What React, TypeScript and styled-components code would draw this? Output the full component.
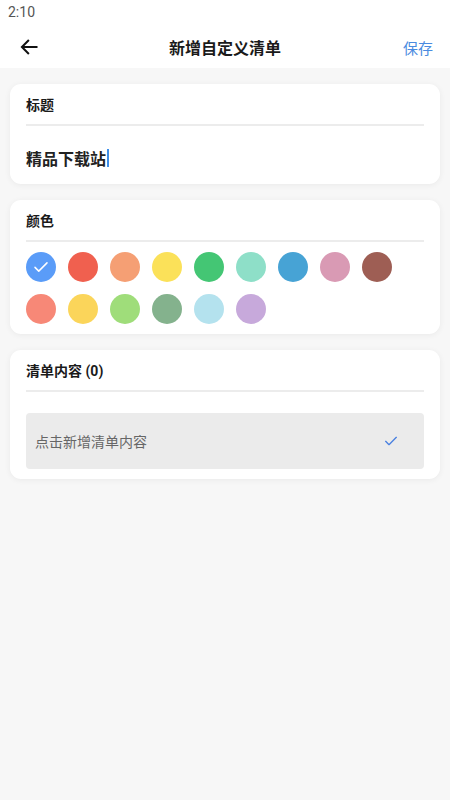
import React, { useState } from 'react';
import styled, { createGlobalStyle } from 'styled-components';

const GlobalStyle = createGlobalStyle`
  html, body {
    margin: 0;
    padding: 0;
    background: #f7f7f7;
    font-family: Roboto, "Noto Sans CJK SC", sans-serif;
  }
  * { box-sizing: border-box; }
`;

const Page = styled.div`
  width: 450px;
  min-height: 800px;
  background: #f7f7f7;
  display: flex;
  flex-direction: column;
`;

const TopArea = styled.div`
  background: #ffffff;
  display: flex;
  flex-direction: column;
`;

const StatusBar = styled.div`
  height: 26px;
  padding: 4px 0 0 8px;
  font-size: 14px;
  color: #555;
`;

const Header = styled.div`
  height: 42px;
  display: flex;
  align-items: center;
  justify-content: space-between;
  padding: 0 17px 0 18px;
  position: relative;
`;

const BackButton = styled.button`
  border: none;
  background: none;
  padding: 0;
  width: 22px;
  height: 22px;
  display: flex;
  align-items: center;
  justify-content: center;
  cursor: pointer;
`;

const HeaderTitle = styled.h1`
  position: absolute;
  left: 0;
  right: 0;
  text-align: center;
  margin: 0;
  font-size: 16px;
  font-weight: 700;
  color: #1a1a1a;
  pointer-events: none;
`;

const SaveButton = styled.button`
  border: none;
  background: none;
  padding: 0;
  font-family: inherit;
  font-size: 15px;
  color: #4a8be0;
  cursor: pointer;
`;

const Content = styled.div`
  display: flex;
  flex-direction: column;
  gap: 16px;
  padding: 16px 10px;
`;

const Card = styled.section`
  background: #fff;
  border-radius: 11px;
  box-shadow: 0 1px 6px rgba(0, 0, 0, 0.06);
  padding: 0 16px;
`;

const CardTitle = styled.div`
  height: 42px;
  display: flex;
  align-items: center;
  font-size: 14px;
  font-weight: 700;
  color: #1a1a1a;
  border-bottom: 2px solid #ececec;
`;

const TitleInputRow = styled.div`
  height: 58px;
  display: flex;
  align-items: center;
  padding-top: 6px;
  font-size: 16px;
  font-weight: 700;
  color: #222;
`;

const Caret = styled.span`
  display: inline-block;
  width: 2px;
  height: 18px;
  background: #3d8ee8;
  margin-left: 1px;
`;

const ColorGrid = styled.div`
  display: grid;
  grid-template-columns: repeat(9, 30px);
  column-gap: 12px;
  row-gap: 12px;
  padding: 10px 0;
`;

const Swatch = styled.button<{ $color: string }>`
  width: 30px;
  height: 30px;
  border-radius: 50%;
  border: none;
  padding: 0;
  background: ${({ $color }) => $color};
  display: flex;
  align-items: center;
  justify-content: center;
  cursor: pointer;
`;

const ItemsBody = styled.div`
  padding: 21px 0 10px;
`;

const AddItem = styled.div`
  height: 56px;
  background: #ebebeb;
  border-radius: 4px;
  display: flex;
  align-items: center;
  justify-content: space-between;
  padding: 0 25px 0 9px;
  font-size: 14px;
  color: #666;
`;

const colors = [
  '#5a9cf8', '#f0604f', '#f59f74', '#fbe159', '#44c674', '#8edfc8',
  '#47a3d5', '#d99ab4', '#9e5e54', '#f78877', '#fbd55a', '#9fdd7a',
  '#84b28d', '#b4e2ee', '#c7a9db',
];

const Check: React.FC<{ color: string; size: number }> = ({ color, size }) => (
  <svg width={size} height={size} viewBox="0 0 24 24" fill="none">
    <path d="M4 12.5l5 5L20 6.5" stroke={color} strokeWidth="2" strokeLinecap="round" strokeLinejoin="round" />
  </svg>
);

const App: React.FC = () => {
  const [selected, setSelected] = useState(0);

  return (
    <Page>
      <GlobalStyle />
      <TopArea>
        <StatusBar>2:10</StatusBar>
        <Header>
          <BackButton aria-label="back">
            <svg width="20" height="20" viewBox="0 0 24 24" fill="none">
              <path d="M21 12H4M11 4.5L3.5 12l7.5 7.5" stroke="#111" strokeWidth="2.4" strokeLinecap="square" />
            </svg>
          </BackButton>
          <HeaderTitle>新增自定义清单</HeaderTitle>
          <SaveButton>保存</SaveButton>
        </Header>
      </TopArea>

      <Content>
        <Card>
          <CardTitle>标题</CardTitle>
          <TitleInputRow>
            精品下载站
            <Caret />
          </TitleInputRow>
        </Card>

        <Card>
          <CardTitle>颜色</CardTitle>
          <ColorGrid>
            {colors.map((c, i) => (
              <Swatch key={c} $color={c} onClick={() => setSelected(i)}>
                {selected === i && <Check color="#fff" size={18} />}
              </Swatch>
            ))}
          </ColorGrid>
        </Card>

        <Card>
          <CardTitle>清单内容 (0)</CardTitle>
          <ItemsBody>
            <AddItem>
              <span>点击新增清单内容</span>
              <Check color="#4a80e0" size={16} />
            </AddItem>
          </ItemsBody>
        </Card>
      </Content>
    </Page>
  );
};

export default App;
